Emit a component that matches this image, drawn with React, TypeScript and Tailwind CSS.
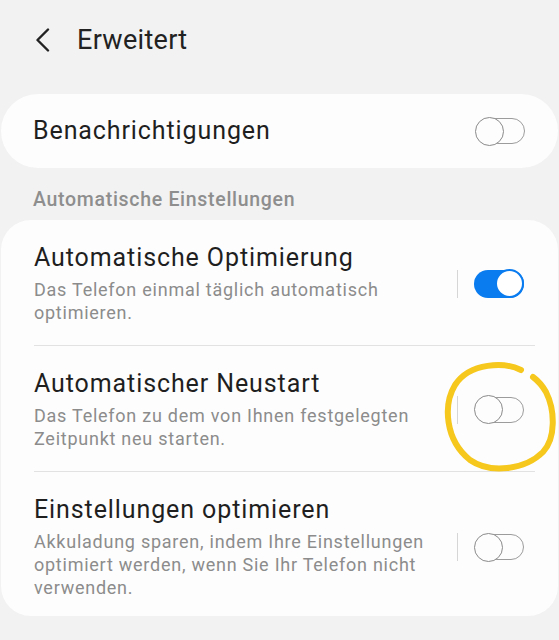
import React from "react";

function Toggle({ on }: { on?: boolean }) {
  if (on) {
    return (
      <div className="relative w-[50px] h-[30px] shrink-0">
        <div className="absolute inset-y-[1px] inset-x-0 rounded-full bg-[#0a7cf0]" />
        <div className="absolute right-0 top-0 w-[29px] h-[29px] rounded-full bg-white border-[2px] border-[#0a7cf0]" />
      </div>
    );
  }
  return (
    <div className="relative w-[50px] h-[30px] shrink-0">
      <div className="absolute inset-y-[2px] left-[6px] right-0 rounded-full border-[1.5px] border-[#9c9c9c]" />
      <div className="absolute left-0 top-[0.5px] w-[29px] h-[29px] rounded-full bg-[#fdfdfd] border-[1.5px] border-[#8a8a8a]" />
    </div>
  );
}

function Row({
  title,
  sub,
  on,
  divider,
  pb,
}: {
  title: string;
  sub: string;
  on?: boolean;
  divider?: boolean;
  pb: string;
}) {
  return (
    <div>
      <div className={`flex items-center pl-[33px] pr-[33px] pt-[23px] ${pb}`}>
        <div className="w-[407px] shrink-0">
          <div className="text-[25px] leading-[30px] tracking-[0.9px] text-[#1f1f1f]">{title}</div>
          <div className="mt-[5px] text-[18px] leading-[23px] tracking-[0.75px] text-[#8c8c8c]">{sub}</div>
        </div>
        <div className="ml-[16px] w-px h-[28px] shrink-0 bg-[#d6d6d6]" />
        <div className="ml-[16px] shrink-0">
          <Toggle on={on} />
        </div>
      </div>
      {divider ? <div className="ml-[33px] mr-[23px] h-px bg-[#e2e2e2]" /> : null}
    </div>
  );
}

export default function App() {
  return (
    <div
      className="relative w-[559px] h-[640px] overflow-hidden bg-[#f2f2f2]"
      style={{ fontFamily: "Roboto, 'Noto Sans', sans-serif" }}
    >
      <div className="h-[80px] flex items-center pl-[36px]">
        <svg width="14" height="24" viewBox="0 0 14 24" className="shrink-0">
          <path d="M12 1.5 L1.5 12 L12 22.5" fill="none" stroke="#222" strokeWidth="2.4" strokeLinecap="round" strokeLinejoin="round" />
        </svg>
        <div className="ml-[27px] text-[27px] leading-[32px] tracking-[0.3px] text-[#222]">Erweitert</div>
      </div>

      <div className="mt-[14px] mx-[1px] h-[74px] rounded-[37px] bg-[#fdfdfd] flex items-center justify-between pl-[32px] pr-[33px]">
        <div className="text-[25px] leading-[30px] tracking-[0.9px] text-[#1f1f1f]">Benachrichtigungen</div>
        <Toggle />
      </div>

      <div className="mt-[20px] pl-[33px] h-[24px] text-[19.5px] leading-[24px] font-medium tracking-[0.7px] text-[#8e8e8e]">
        Automatische Einstellungen
      </div>

      <div className="mt-[8px] mx-[1px] rounded-[30px] bg-[#fdfdfd]">
        <Row
          title="Automatische Optimierung"
          sub="Das Telefon einmal täglich automatisch optimieren."
          on
          divider
          pb="pb-[21px]"
        />
        <Row
          title="Automatischer Neustart"
          sub="Das Telefon zu dem von Ihnen festgelegten Zeitpunkt neu starten."
          divider
          pb="pb-[21px]"
        />
        <Row
          title="Einstellungen optimieren"
          sub="Akkuladung sparen, indem Ihre Einstellungen optimiert werden, wenn Sie Ihr Telefon nicht verwenden."
          pb="pb-[17px]"
        />
      </div>

      <svg className="absolute left-0 top-0 pointer-events-none" width="559" height="640" viewBox="0 0 559 640">
        <path
          d="M521 370 C505 362 470 362 455 385 C443 405 445 440 470 460 C490 474 525 470 543 452 C556 438 555 410 546 392 C542 385 537 380 533 377"
          fill="none"
          stroke="#f6c71c"
          strokeWidth="6"
          strokeLinecap="round"
        />
      </svg>
    </div>
  );
}
